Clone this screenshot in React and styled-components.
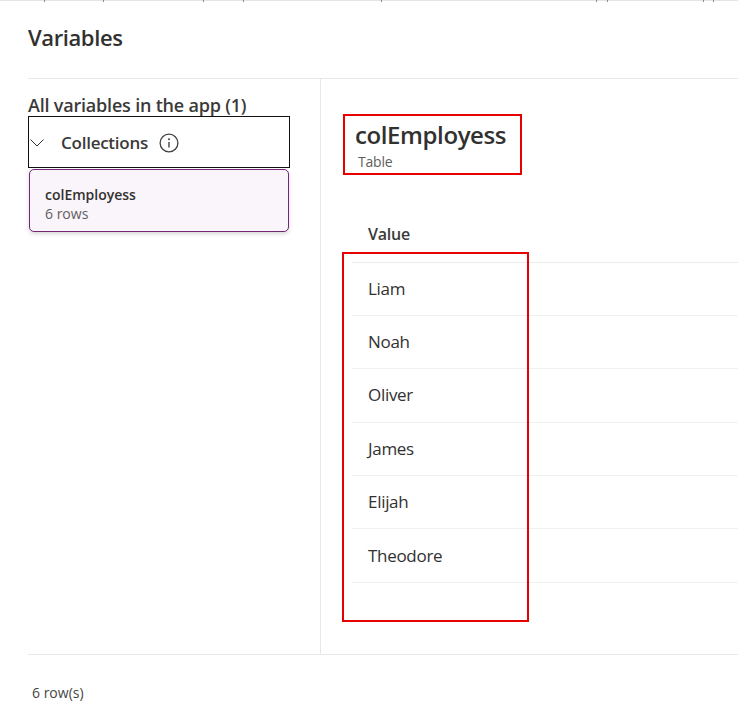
import React from "react";
import styled, { createGlobalStyle } from "styled-components";

const rows = ["Liam", "Noah", "Oliver", "James", "Elijah", "Theodore"];
const ticks = [44, 103, 203, 243, 381, 596, 607, 703, 713];

const GlobalStyle = createGlobalStyle`
  html, body {
    margin: 0;
    background: #fff;
    font-family: "Open Sans", "Noto Sans", sans-serif;
    color: #323130;
  }
`;

const Page = styled.div`
  width: 738px;
  height: 724px;
  overflow: hidden;
  display: flex;
  flex-direction: column;
  box-sizing: border-box;
`;

const TopStrip = styled.div`
  height: 1px;
  flex: none;
  background: #e4e4e4;
  position: relative;
`;

const Tick = styled.span`
  position: absolute;
  top: 0;
  width: 1px;
  height: 2px;
  background: #8a8a8a;
`;

const Header = styled.header`
  height: 77px;
  flex: none;
  margin-left: 28px;
  border-bottom: 1px solid #e8e8e8;
  box-sizing: content-box;
  display: flex;
  align-items: center;
`;

const Title = styled.h1`
  margin: 0 0 6px;
  font-size: 22px;
  font-weight: 600;
  color: #323130;
  letter-spacing: -0.4px;
`;

const Body = styled.div`
  height: 575px;
  flex: none;
  margin-left: 28px;
  display: flex;
  border-bottom: 1px solid #e8e8e8;
`;

const Sidebar = styled.aside`
  width: 292px;
  flex: none;
  border-right: 1px solid #e8e8e8;
  box-sizing: content-box;
  padding-top: 15px;
`;

const SidebarTitle = styled.div`
  font-size: 18px;
  line-height: 22px;
  font-weight: 600;
  color: #3b3a39;
  letter-spacing: -0.2px;
  white-space: nowrap;
`;

const GroupHeader = styled.div`
  width: 262px;
  height: 52px;
  box-sizing: border-box;
  border: 1px solid #111;
  display: flex;
  align-items: center;
  padding: 1px 0 0 1px;
`;

const GroupLabel = styled.span`
  margin-left: 17px;
  font-size: 17px;
  font-weight: 600;
  color: #3b3a39;
  letter-spacing: -0.25px;
`;

const InfoIcon = styled.svg`
  width: 20px;
  height: 20px;
  margin-left: 11px;
  color: #424242;
`;

const VariableCard = styled.div`
  width: 260px;
  height: 63px;
  box-sizing: border-box;
  margin: 1px 0 0 1px;
  padding: 15px 15px 0;
  background: #faf4fb;
  border: 1px solid #742774;
  border-radius: 5px;
  box-shadow: 0 2px 4px rgba(0, 0, 0, 0.16);
`;

const CardName = styled.div`
  font-size: 14px;
  line-height: 19px;
  font-weight: 600;
  color: #323130;
`;

const CardMeta = styled.div`
  font-size: 14px;
  line-height: 19px;
  color: #605e5c;
`;

const Detail = styled.main`
  flex: 1;
  min-width: 0;
  position: relative;
  padding-top: 35px;
`;

const DetailHead = styled.div`
  width: 179px;
  height: 61px;
  box-sizing: border-box;
  margin-left: 22px;
  border: 2px solid #e60000;
  padding: 2px 0 0 10px;
`;

const DetailName = styled.div`
  font-size: 24px;
  line-height: 33px;
  font-weight: 600;
  color: #323130;
  letter-spacing: -0.4px;
`;

const DetailType = styled.div`
  margin: 3px 0 0 3px;
  font-size: 14px;
  line-height: 16px;
  color: #605e5c;
  letter-spacing: -0.2px;
`;

const Table = styled.div`
  margin: 34px 0 0 31px;
`;

const HeadCell = styled.div`
  height: 53.5px;
  box-sizing: border-box;
  padding: 13px 0 0 16px;
  font-size: 16px;
  line-height: 24px;
  font-weight: 600;
  color: #3b3a39;
  letter-spacing: -0.25px;
  border-bottom: 1px solid #ececec;
`;

const Row = styled.div`
  height: 53.4px;
  box-sizing: border-box;
  padding: 0 0 1px 16px;
  display: flex;
  align-items: center;
  font-size: 17px;
  color: #323130;
  letter-spacing: -0.3px;
  border-bottom: 1px solid #f1f1f1;
`;

const Highlight = styled.div`
  position: absolute;
  left: 21px;
  top: 173px;
  width: 187px;
  height: 370px;
  box-sizing: border-box;
  border: 2px solid #e60000;
  pointer-events: none;
`;

const Footer = styled.footer`
  flex: 1;
  padding: 28px 0 0 32px;
  font-size: 14px;
  line-height: 20px;
  color: #484644;
`;

export default function App() {
  return (
    <Page>
      <GlobalStyle />
      <TopStrip>
        {ticks.map((x) => (
          <Tick key={x} style={{ left: x }} />
        ))}
      </TopStrip>
      <Header>
        <Title>Variables</Title>
      </Header>
      <Body>
        <Sidebar>
          <SidebarTitle>All variables in the app (1)</SidebarTitle>
          <GroupHeader>
            <svg width="14" height="8" viewBox="0 0 14 8" fill="none">
              <path d="M0.5 0.5l6.5 6.5 6.5-6.5" stroke="#323130" strokeWidth="1" />
            </svg>
            <GroupLabel>Collections</GroupLabel>
            <InfoIcon viewBox="0 0 20 20" fill="none">
              <circle cx="10" cy="10" r="8.9" stroke="currentColor" strokeWidth="1.3" />
              <path d="M10 9v5.5" stroke="currentColor" strokeWidth="1.4" />
              <circle cx="10" cy="6.3" r="1" fill="currentColor" />
            </InfoIcon>
          </GroupHeader>
          <VariableCard>
            <CardName>colEmployess</CardName>
            <CardMeta>6 rows</CardMeta>
          </VariableCard>
        </Sidebar>
        <Detail>
          <DetailHead>
            <DetailName>colEmployess</DetailName>
            <DetailType>Table</DetailType>
          </DetailHead>
          <Table>
            <HeadCell>Value</HeadCell>
            {rows.map((name) => (
              <Row key={name}>{name}</Row>
            ))}
          </Table>
          <Highlight />
        </Detail>
      </Body>
      <Footer>6 row(s)</Footer>
    </Page>
  );
}
